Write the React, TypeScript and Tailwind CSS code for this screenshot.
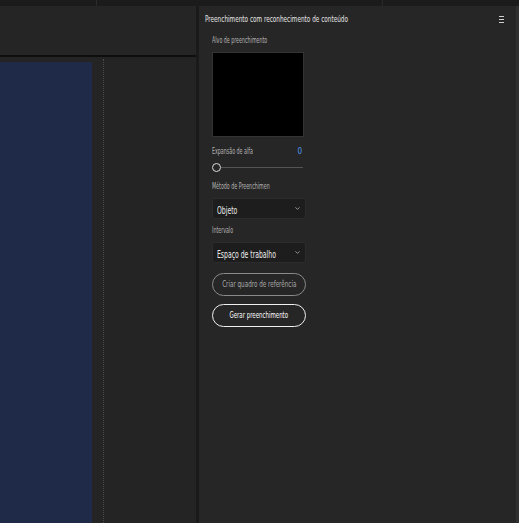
import { ChevronDown } from 'lucide-react';

const font = { fontFamily: '"DejaVu Sans Condensed", "Liberation Sans", sans-serif' };

function Label({ children }: { children: string }) {
  return (
    <div className="h-[10px] whitespace-nowrap text-[8px] leading-[10px] text-[#b4b4b4]">
      <span className="inline-block origin-left scale-x-[0.66]">{children}</span>
    </div>
  );
}

function Select({ value }: { value: string }) {
  return (
    <div className="flex h-[21px] w-[94px] items-center rounded-[3px] border border-[#2c2c2c] bg-[#1d1d1d] pl-[4px] pr-[4px]">
      <div className="min-w-0 flex-1 whitespace-nowrap">
        <span className="inline-block origin-left scale-x-[0.68] text-[10px] text-[#ececec]">{value}</span>
      </div>
      <ChevronDown className="h-[7px] w-[7px] shrink-0 text-[#bbbbbb]" strokeWidth={2.5} />
    </div>
  );
}

function FillPanel() {
  return (
    <div className="flex flex-1 flex-col bg-[#262626]">
      <div className="flex h-[26px] items-center justify-between pl-[6px] pr-[12px]">
        <span className="inline-block origin-left scale-x-[0.67] whitespace-nowrap text-[9.5px] text-[#e6e6e6]">
          Preenchimento com reconhecimento de conteúdo
        </span>
        <div className="flex flex-col gap-[2px]">
          <div className="h-[1px] w-[5px] bg-[#cfcfcf]" />
          <div className="h-[1px] w-[5px] bg-[#cfcfcf]" />
          <div className="h-[1px] w-[5px] bg-[#cfcfcf]" />
        </div>
      </div>

      <div className="flex w-[107px] flex-col pl-[13px]">
        <div className="mt-[4px]">
          <Label>Alvo de preenchimento</Label>
        </div>
        <div className="mt-[6px] h-[85px] w-[92px] border border-[#333333] bg-black" />

        <div className="mt-[10px] flex items-center justify-between pr-[4px]">
          <Label>Expansão de alfa</Label>
          <span className="text-[8px] leading-[10px] text-[#4d98f2]">0</span>
        </div>
        <div className="mt-[6px] flex items-center">
          <div className="h-[9px] w-[9px] rounded-full border-[1.5px] border-[#dcdcdc]" />
          <div className="h-[1px] w-[82px] bg-[#555555]" />
        </div>

        <div className="mt-[10px]">
          <Label>Método de Preenchimen</Label>
        </div>
        <div className="mt-[6px]">
          <Select value="Objeto" />
        </div>

        <div className="mt-[7px]">
          <Label>Intervalo</Label>
        </div>
        <div className="mt-[6px]">
          <Select value="Espaço de trabalho" />
        </div>

        <div className="mt-[10px] flex h-[23px] w-[94px] items-center justify-center rounded-full border border-[#8a8a8a] text-[9.5px] text-[#a8a8a8]">
          <span className="inline-block scale-x-[0.66] whitespace-nowrap">Criar quadro de referência</span>
        </div>
        <div className="mt-[8px] flex h-[23px] w-[94px] items-center justify-center rounded-full border-[1.5px] border-[#f0f0f0] text-[9.5px] font-medium text-white">
          <span className="inline-block scale-x-[0.64] whitespace-nowrap">Gerar preenchimento</span>
        </div>
      </div>
    </div>
  );
}

export default function App() {
  return (
    <div className="flex h-[523px] w-[519px] flex-col overflow-hidden bg-[#1b1b1b]" style={font}>
      <div className="flex h-[6px] shrink-0">
        <div className="w-[97px] border-r border-[#2a2a2a]" />
        <div className="w-[286px] border-r border-[#2a2a2a]" />
      </div>
      <div className="flex flex-1">
        <div className="flex w-[196px] flex-col">
          <div className="h-[49px] bg-[#252525]" />
          <div className="h-[2px] bg-[#0e0e0e]" />
          <div className="flex flex-1 bg-[#242424]">
            <div className="mt-[5px] w-[92px] bg-[#1e2a47]" />
            <div className="ml-[11px] mt-[2px] border-l border-dotted border-[#4a4a4a]" />
          </div>
        </div>
        <div className="w-[3px] bg-[#1a1a1a]" />
        <FillPanel />
        <div className="w-[3px] bg-[#303030]" />
      </div>
    </div>
  );
}
